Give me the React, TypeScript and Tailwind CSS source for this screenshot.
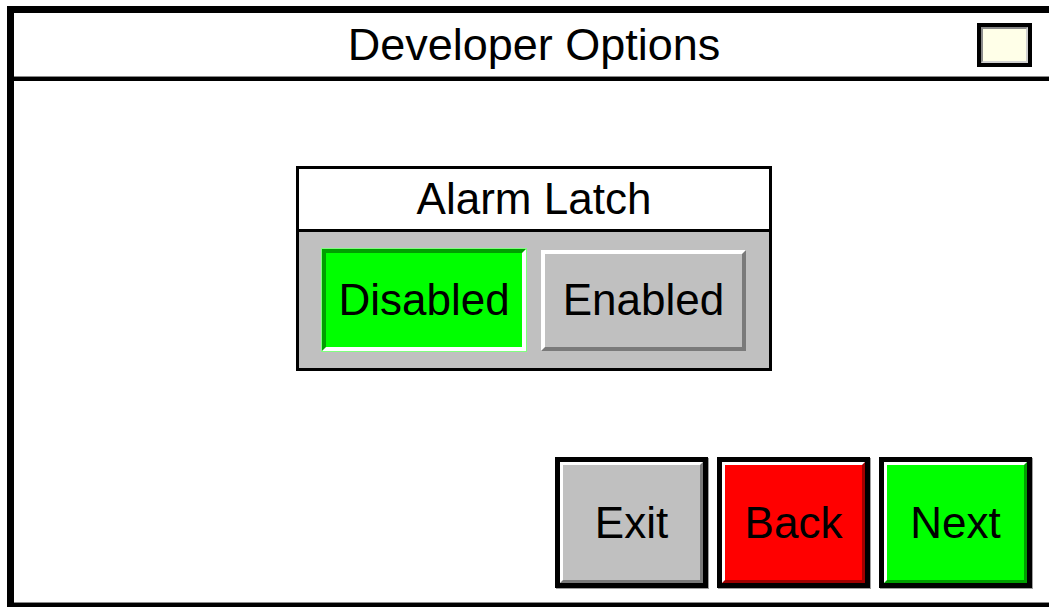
const font = { fontFamily: '"Liberation Sans", Arial, sans-serif' };

function BevelButton({
	label,
	face,
	shade,
}: {
	label: string;
	face: string;
	shade: string;
}) {
	return (
		<div className="w-[153px] h-[131px] border-[5px] border-black shadow-[1px_1px_0_#a0a0a0]">
			<div
				className={`h-full w-full flex items-center justify-center border-[3px] border-t-white border-l-white ${face} ${shade} text-[44px] leading-none text-black`}
			>
				{label}
			</div>
		</div>
	);
}

export default function App() {
	return (
		<div className="w-[1049px] h-[607px] bg-white overflow-hidden" style={font}>
			<div className="ml-[7px] mt-[6px] w-[1054px] h-[601px] flex flex-col border-t-[7px] border-l-[7px] border-r-[7px] border-black">
				{/* header */}
				<div className="h-[63px] grid grid-cols-[1fr_auto_1fr] items-center">
					<div />
					<div className="text-[45px] leading-none text-black">Developer Options</div>
					<div className="flex justify-end pr-[22px]">
						<div className="w-[55px] h-[44px] border-4 border-black">
							<div className="h-full w-full border-2 border-t-[#8a8a8a] border-l-[#8a8a8a] border-b-[#d0d0d0] border-r-[#d0d0d0] bg-[#ffffe8]" />
						</div>
					</div>
				</div>
				<div className="h-px bg-[#8a8a8a]" />
				<div className="h-[4px] bg-black" />

				{/* content */}
				<div className="flex-1 flex flex-col">
					<div className="mt-[85px] mx-auto w-[476px] border-[3px] border-black">
						<div className="h-[60px] flex items-center justify-center text-[44px] leading-none text-black">
							Alarm Latch
						</div>
						<div className="h-[3px] bg-black" />
						<div className="h-[136px] bg-[#c0c0c0] flex items-center gap-[14px] pl-[22px]">
							<div className="w-[206px] h-[104px] border border-[#80ff80]">
								<div className="h-full w-full flex items-center justify-center border-[4px] border-t-[#00a000] border-l-[#00a000] border-b-white border-r-white bg-[#00ff00] text-[44px] leading-none text-black">
									Disabled
								</div>
							</div>
							<div className="w-[205px] h-[101px] flex items-center justify-center border-[4px] border-t-white border-l-white border-b-[#7a7a7a] border-r-[#7a7a7a] bg-[#c0c0c0] text-[44px] leading-none text-black">
								Enabled
							</div>
						</div>
					</div>

					<div className="flex-1" />

					<div className="flex justify-end gap-[9px] pr-[22px] pb-[14px]">
						<BevelButton label="Exit" face="bg-[#c0c0c0]" shade="border-b-[#7a7a7a] border-r-[#7a7a7a]" />
						<BevelButton label="Back" face="bg-[#ff0000]" shade="border-b-[#a00000] border-r-[#a00000]" />
						<BevelButton label="Next" face="bg-[#00ff00]" shade="border-b-[#00a000] border-r-[#00a000]" />
					</div>
				</div>

				<div className="h-px bg-[#8a8a8a]" />
				<div className="h-[4px] bg-black" />
			</div>
		</div>
	);
}
